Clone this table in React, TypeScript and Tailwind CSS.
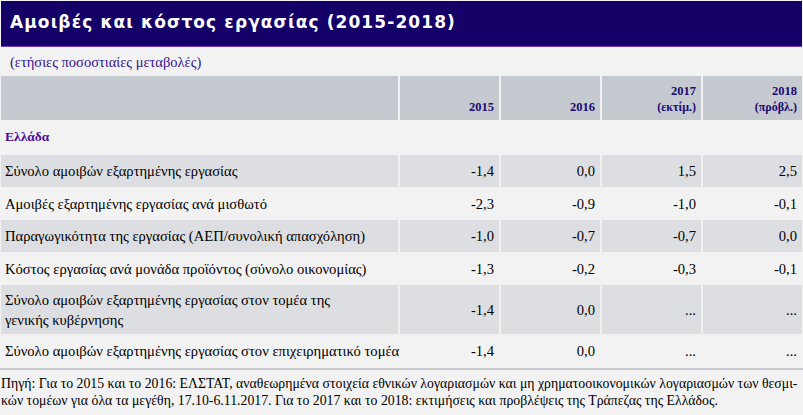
import React from "react";

const serif = { fontFamily: '"Liberation Serif", "Times New Roman", serif' };

type Row = { label: React.ReactNode; v: string[]; grey: boolean; h: string };

const rows: Row[] = [
  { label: "Σύνολο αμοιβών εξαρτημένης εργασίας", v: ["-1,4", "0,0", "1,5", "2,5"], grey: true, h: "h-[32px]" },
  { label: "Αμοιβές εξαρτημένης εργασίας ανά μισθωτό", v: ["-2,3", "-0,9", "-1,0", "-0,1"], grey: false, h: "h-[33px]" },
  { label: "Παραγωγικότητα της εργασίας (ΑΕΠ/συνολική απασχόληση)", v: ["-1,0", "-0,7", "-0,7", "0,0"], grey: true, h: "h-[32px]" },
  { label: "Κόστος εργασίας ανά μονάδα προϊόντος (σύνολο οικονομίας)", v: ["-1,3", "-0,2", "-0,3", "-0,1"], grey: false, h: "h-[33px]" },
  {
    label: (
      <>
        Σύνολο αμοιβών εξαρτημένης εργασίας στον τομέα της
        <br />
        γενικής κυβέρνησης
      </>
    ),
    v: ["-1,4", "0,0", "...", "..."],
    grey: true,
    h: "h-[49px]",
  },
  { label: "Σύνολο αμοιβών εξαρτημένης εργασίας στον επιχειρηματικό τομέα", v: ["-1,4", "0,0", "...", "..."], grey: false, h: "h-[34px]" },
];

export default function App() {
  return (
    <div className="w-[803px] h-[415px] bg-[#f2f2f2] overflow-hidden relative">
      <div className="pt-[1px] px-[1px]">
        <div className="h-[46px] bg-[#140066] border-b border-[#6b3fc4] flex items-center pl-[9px]">
          <span
            className="text-white font-bold text-[17px] tracking-[1.1px] pb-[2px]"
            style={{ fontFamily: '"DejaVu Sans", Verdana, sans-serif' }}
          >
            Αμοιβές και κόστος εργασίας (2015-2018)
          </span>
        </div>
      </div>
      <div className="h-[29px] pl-[10px] pt-[6px] text-[14.5px] text-[#35138c] leading-[19px] whitespace-nowrap" style={serif}>
        (ετήσιες ποσοστιαίες μεταβολές)
      </div>
      <div className="pl-[1px]" style={serif}>
        <div className="grid grid-cols-[397px_99px_99px_99px_99px] gap-x-[2px] h-[44px] text-[#1a0a70] font-bold text-[12.5px] leading-[16px]">
          <div className="bg-[#c5c9d0]" />
          <div className="bg-[#c5c9d0] flex items-end justify-end pr-[5px] pb-[5px]">2015</div>
          <div className="bg-[#c5c9d0] flex items-end justify-end pr-[5px] pb-[5px]">2016</div>
          <div className="bg-[#c5c9d0] flex flex-col items-end justify-end pr-[5px] pb-[5px]">
            <span>2017</span>
            <span className="text-[12px]">(εκτίμ.)</span>
          </div>
          <div className="bg-[#c5c9d0] flex flex-col items-end justify-end pr-[5px] pb-[5px]">
            <span>2018</span>
            <span className="text-[12px]">(πρόβλ.)</span>
          </div>
        </div>
        <div className="h-[35px] flex items-center pl-[4px] font-bold text-[13.5px] text-[#4a0c9c]">
          Ελλάδα
        </div>
        {rows.map((r, i) => (
          <div
            key={i}
            className={`grid grid-cols-[397px_99px_99px_99px_99px] gap-x-[2px] ${r.h} text-[14.6px] leading-[20px] text-black`}
          >
            <div className={`${r.grey ? "bg-[#dcdee1]" : ""} flex items-center pl-[4px] whitespace-nowrap`}>
              <span>{r.label}</span>
            </div>
            {r.v.map((x, j) => (
              <div
                key={j}
                className={`${r.grey ? "bg-[#dcdee1]" : ""} flex items-center justify-end pr-[5px]`}
              >
                {x}
              </div>
            ))}
          </div>
        ))}
      </div>
      <div className="h-[2px] bg-[#c8cad0]" />
      <div className="pt-[5px] pl-[1px] text-[13.8px] leading-[17px] text-black whitespace-nowrap" style={serif}>
        Πηγή: Για το 2015 και το 2016: ΕΛΣΤΑΤ, αναθεωρημένα στοιχεία εθνικών λογαριασμών και μη χρηματοοικονομικών λογαριασμών των θεσμι-
        <br />
        κών τομέων για όλα τα μεγέθη, 17.10-6.11.2017. Για το 2017 και το 2018: εκτιμήσεις και προβλέψεις της Τράπεζας της Ελλάδος.
      </div>
    </div>
  );
}
